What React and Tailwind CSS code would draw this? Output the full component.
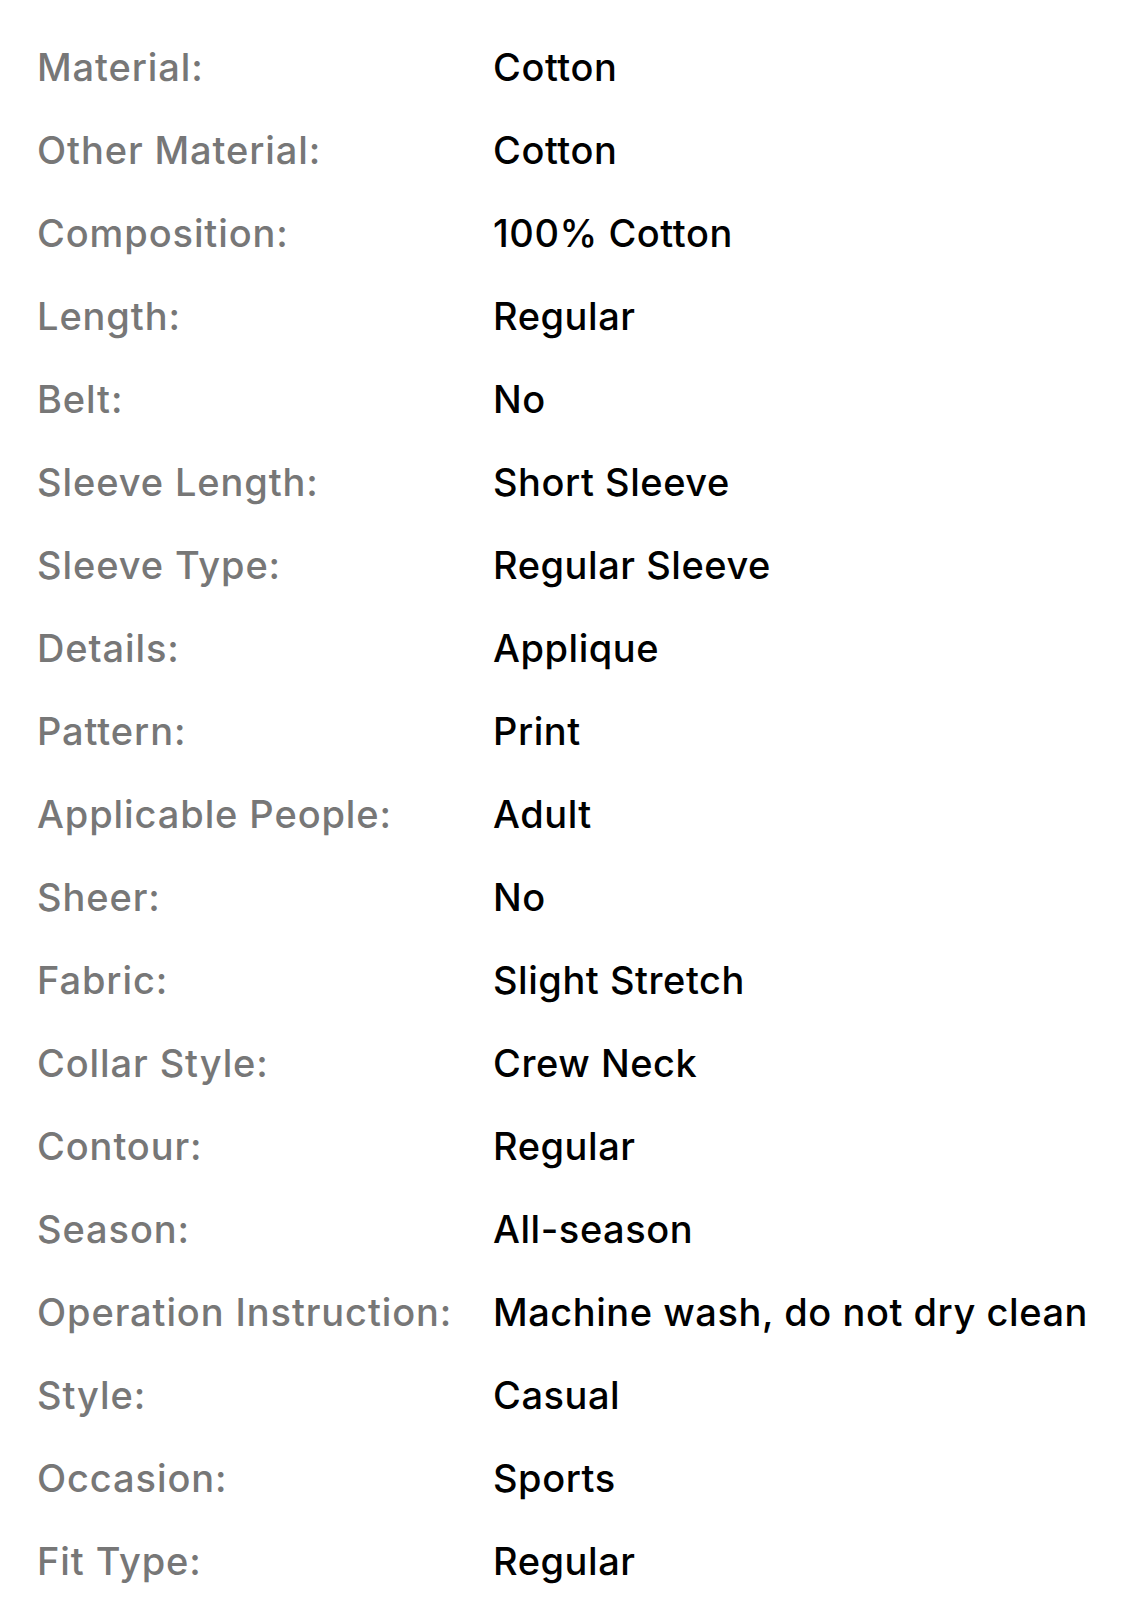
import React from "react";

const rows = [
  ["Material:", "Cotton"],
  ["Other Material:", "Cotton"],
  ["Composition:", "100% Cotton"],
  ["Length:", "Regular"],
  ["Belt:", "No"],
  ["Sleeve Length:", "Short Sleeve"],
  ["Sleeve Type:", "Regular Sleeve"],
  ["Details:", "Applique"],
  ["Pattern:", "Print"],
  ["Applicable People:", "Adult"],
  ["Sheer:", "No"],
  ["Fabric:", "Slight Stretch"],
  ["Collar Style:", "Crew Neck"],
  ["Contour:", "Regular"],
  ["Season:", "All-season"],
  ["Operation Instruction:", "Machine wash, do not dry clean"],
  ["Style:", "Casual"],
  ["Occasion:", "Sports"],
  ["Fit Type:", "Regular"],
];

export default function App() {
  return (
    <div
      className="w-[1125px] h-[1616px] bg-white pt-[26px] pl-[37px] overflow-hidden"
      style={{ fontFamily: "Inter, 'Noto Sans', sans-serif" }}
    >
      {rows.map(([k, v]) => (
        <div key={k} className="flex h-[83px] items-center text-[38px] font-medium whitespace-nowrap">
          <div className="w-[456px] text-[#777777] tracking-[0.9px]">{k}</div>
          <div className="text-black tracking-[0.55px]">{v}</div>
        </div>
      ))}
    </div>
  );
}
